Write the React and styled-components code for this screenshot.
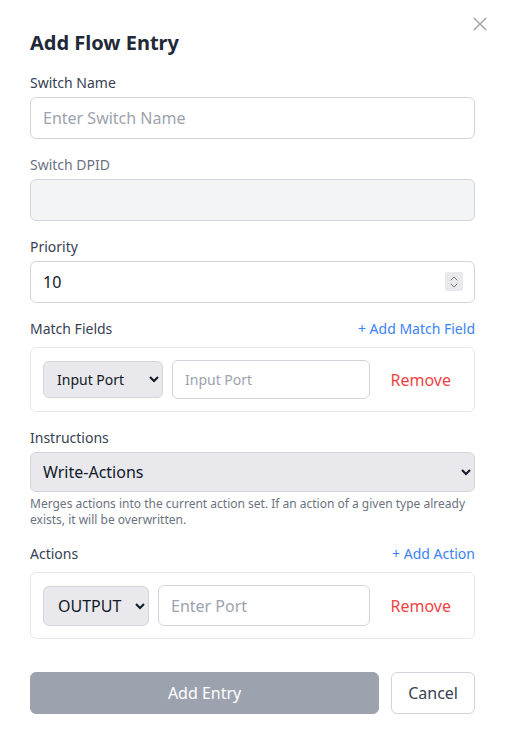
import styled, { createGlobalStyle } from "styled-components";

const Global = createGlobalStyle`
  html, body {
    margin: 0;
    padding: 0;
    background: #fff;
    font-family: "Noto Sans", "Open Sans", sans-serif;
    color: #1f2937;
  }
  * { box-sizing: border-box; }
`;

const Modal = styled.div`
  position: relative;
  width: 505px;
  min-height: 745px;
  padding: 29px 30px 24px;
  background: #fff;
`;

const Close = styled.button`
  position: absolute;
  top: 14px;
  right: 15px;
  width: 20px;
  height: 20px;
  padding: 0;
  border: none;
  background: none;
  color: #9ca3af;
  cursor: pointer;
`;

const Title = styled.h2`
  margin: 0 0 16px;
  font-size: 20px;
  line-height: 28px;
  font-weight: 700;
  color: #1f2937;
`;

const Field = styled.div`
  margin-bottom: 16px;
`;

const Label = styled.label`
  display: block;
  margin-bottom: 4px;
  font-size: 14px;
  line-height: 20px;
  font-weight: 400;
  color: ${(p) => (p.$muted ? "#6b7280" : "#374151")};
`;

const LabelRow = styled.div`
  display: flex;
  justify-content: space-between;
  align-items: center;
  margin-bottom: 8px;
  ${Label} { margin-bottom: 0; }
`;

const LinkButton = styled.button`
  padding: 0;
  border: none;
  background: none;
  font-family: inherit;
  font-size: 14px;
  line-height: 20px;
  color: #3b82f6;
  cursor: pointer;
`;

const Input = styled.input`
  display: block;
  width: ${(p) => (p.$grow ? "auto" : "100%")};
  flex: ${(p) => (p.$grow ? "1" : "none")};
  min-width: 0;
  height: ${(p) => (p.$h || 42) + "px"};
  padding: 0 12px;
  border: 1px solid #d1d5db;
  border-radius: 6px;
  background: ${(p) => (p.disabled ? "#f3f4f6" : "#fff")};
  font-family: inherit;
  font-size: ${(p) => (p.$small ? "14px" : "16px")};
  color: #111827;
  &::placeholder { color: #9ca3af; }
  &::-webkit-inner-spin-button,
  &::-webkit-outer-spin-button {
    -webkit-appearance: none;
    margin: 0;
  }
`;

const NumberWrap = styled.div`
  position: relative;
`;

const Spinner = styled.span`
  position: absolute;
  top: 11px;
  right: 12px;
  width: 18px;
  height: 19px;
  display: flex;
  align-items: center;
  justify-content: center;
  background: #e9e9ed;
  border-radius: 2px;
  color: #6b7280;
  pointer-events: none;
`;

const Select = styled.select`
  display: block;
  width: ${(p) => (p.$w ? p.$w + "px" : "100%")};
  flex: none;
  height: ${(p) => (p.$h || 40) + "px"};
  padding: 0 8px 0 ${(p) => p.$pl || 8}px;
  border: 1px solid #d1d5db;
  border-radius: 6px;
  background-color: #e9e9ed;
  font-family: inherit;
  font-size: ${(p) => (p.$small ? "14px" : "16px")};
  color: #111827;
`;

const Box = styled.div`
  border: 1px solid #e5e7eb;
  border-radius: 6px;
  padding: 12px;
`;

const Row = styled.div`
  display: flex;
  align-items: center;
  gap: 9px;
`;

const Remove = styled.button`
  padding: 8px 11px 8px 12px;
  border: none;
  background: none;
  font-family: inherit;
  font-size: 16px;
  color: #ef4444;
  cursor: pointer;
`;

const Help = styled.p`
  margin: 4px 0 0;
  font-size: 12px;
  line-height: 16px;
  color: #6b7280;
`;

const Footer = styled.div`
  display: flex;
  gap: 12px;
  margin-top: 33px;
`;

const Button = styled.button`
  height: 42px;
  padding: 0 16px;
  border-radius: 6px;
  font-family: inherit;
  font-size: 16px;
  flex: ${(p) => (p.$primary ? "1" : "none")};
  border: 1px solid ${(p) => (p.$primary ? "#9ca3af" : "#d1d5db")};
  background: ${(p) => (p.$primary ? "#9ca3af" : "#fff")};
  color: ${(p) => (p.$primary ? "#fff" : "#374151")};
`;

function XIcon() {
  return (
    <svg width="20" height="20" viewBox="0 0 24 24" fill="none" stroke="currentColor" strokeWidth="1.7" strokeLinecap="round">
      <path d="M5 5l14 14M19 5L5 19" />
    </svg>
  );
}

function SpinIcon() {
  return (
    <svg width="10" height="14" viewBox="0 0 10 14" fill="none" stroke="currentColor" strokeWidth="1" strokeLinecap="round" strokeLinejoin="round">
      <path d="M2 5l3-3 3 3M2 9l3 3 3-3" />
    </svg>
  );
}

export default function App() {
  return (
    <Modal>
      <Global />
      <Close aria-label="Close">
        <XIcon />
      </Close>
      <Title>Add Flow Entry</Title>

      <Field>
        <Label>Switch Name</Label>
        <Input placeholder="Enter Switch Name" />
      </Field>

      <Field>
        <Label $muted>Switch DPID</Label>
        <Input disabled />
      </Field>

      <Field>
        <Label>Priority</Label>
        <NumberWrap>
          <Input type="number" defaultValue={10} />
          <Spinner>
            <SpinIcon />
          </Spinner>
        </NumberWrap>
      </Field>

      <Field>
        <LabelRow>
          <Label>Match Fields</Label>
          <LinkButton>+ Add Match Field</LinkButton>
        </LabelRow>
        <Box>
          <Row>
            <Select $small $w={120} $h={37} $pl={9} defaultValue="in_port">
              <option value="in_port">Input Port</option>
            </Select>
            <Input $grow $small $h={39} placeholder="Input Port" />
            <Remove>Remove</Remove>
          </Row>
        </Box>
      </Field>

      <Field>
        <Label>Instructions</Label>
        <Select $h={40} defaultValue="write">
          <option value="write">Write-Actions</option>
        </Select>
        <Help>
          Merges actions into the current action set. If an action of a given
          type already exists, it will be overwritten.
        </Help>
      </Field>

      <Field>
        <LabelRow>
          <Label>Actions</Label>
          <LinkButton>+ Add Action</LinkButton>
        </LabelRow>
        <Box>
          <Row>
            <Select $w={106} $h={40} $pl={10} defaultValue="output">
              <option value="output">OUTPUT</option>
            </Select>
            <Input $grow $h={41} placeholder="Enter Port" />
            <Remove>Remove</Remove>
          </Row>
        </Box>
      </Field>

      <Footer>
        <Button $primary disabled>Add Entry</Button>
        <Button>Cancel</Button>
      </Footer>
    </Modal>
  );
}
